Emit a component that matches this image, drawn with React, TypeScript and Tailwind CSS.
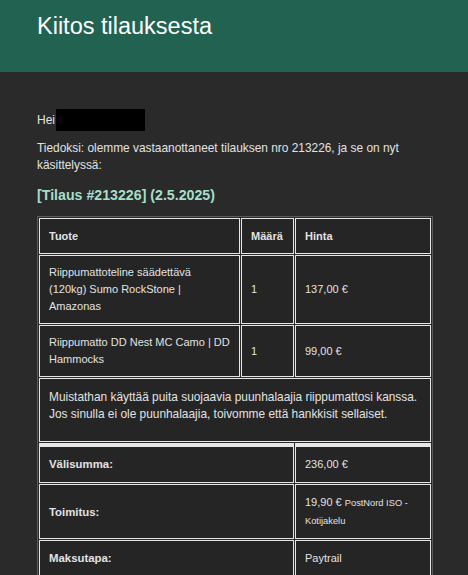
const items = [
  { name: 'Riippumattoteline säädettävä (120kg) Sumo RockStone | Amazonas', qty: 1, price: '137,00 €' },
  { name: 'Riippumatto DD Nest MC Camo | DD Hammocks', qty: 1, price: '99,00 €' },
];

const cell = 'border border-[#e6e6e6] bg-[#252525] px-[9px] align-middle text-left';

export default function App() {
  return (
    <div className="min-h-[575px] bg-[#2a2a2a] text-[#e2e2e2] font-['Liberation_Sans',Arial,sans-serif] text-[12px] leading-[17px]">
      <header className="h-[72px] bg-[#216350] px-[37px] pt-[12px]">
        <h1 className="text-[23.5px] leading-[28px] text-white">Kiitos tilauksesta</h1>
      </header>

      <main className="px-[37px] pt-[37px]">
        <p className="flex items-center h-[22px]">
          Hei<span className="ml-[1px] inline-block h-[22px] w-[89px] bg-black" />
        </p>
        <p className="mt-[9px] text-[11.9px]">
          Tiedoksi: olemme vastaanottaneet tilauksen nro 213226, ja se on nyt käsittelyssä:
        </p>
        <h2 className="mt-[11px] text-[14.2px] leading-[20px] font-bold text-[#a6dfc8]">
          [Tilaus #213226] (2.5.2025)
        </h2>

        <table className="mt-[11px] w-[396px] border border-[#5c5c5c] border-separate [border-spacing:1px] table-fixed text-[11px]">
          <colgroup>
            <col className="w-[201px]" />
            <col className="w-[53px]" />
            <col />
          </colgroup>
          <thead>
            <tr>
              <th className={`${cell} h-[36px] font-bold`}>Tuote</th>
              <th className={`${cell} font-bold`}>Määrä</th>
              <th className={`${cell} font-bold`}>Hinta</th>
            </tr>
          </thead>
          <tbody>
            {items.map((it) => (
              <tr key={it.name}>
                <td className={`${cell} py-[8px]`}>{it.name}</td>
                <td className={cell}>{it.qty}</td>
                <td className={cell}>{it.price}</td>
              </tr>
            ))}
            <tr>
              <td colSpan={3} className={`${cell} pt-[10px] pb-[18px] text-[11.9px]`}>
                Muistathan käyttää puita suojaavia puunhalaajia riippumattosi kanssa.
                <br />
                Jos sinulla ei ole puunhalaajia, toivomme että hankkisit sellaiset.
              </td>
            </tr>
          </tbody>
          <tfoot>
            <tr>
              <th colSpan={2} className={`${cell} border-t-[4px] py-[9px] font-bold text-[11.4px]`}>Välisumma:</th>
              <td className={`${cell} border-t-[4px] py-[9px]`}>236,00 €</td>
            </tr>
            <tr>
              <th colSpan={2} className={`${cell} pt-[9px] pb-[8px] font-bold text-[11.4px]`}>Toimitus:</th>
              <td className={`${cell} pt-[9px] pb-[8px]`}>
                19,90 € <span className="text-[9.3px] leading-[17px]">PostNord ISO - Kotijakelu</span>
              </td>
            </tr>
            <tr>
              <th colSpan={2} className={`${cell} py-[9px] font-bold text-[11.4px]`}>Maksutapa:</th>
              <td className={`${cell} py-[9px]`}>Paytrail</td>
            </tr>
          </tfoot>
        </table>
      </main>
    </div>
  );
}
